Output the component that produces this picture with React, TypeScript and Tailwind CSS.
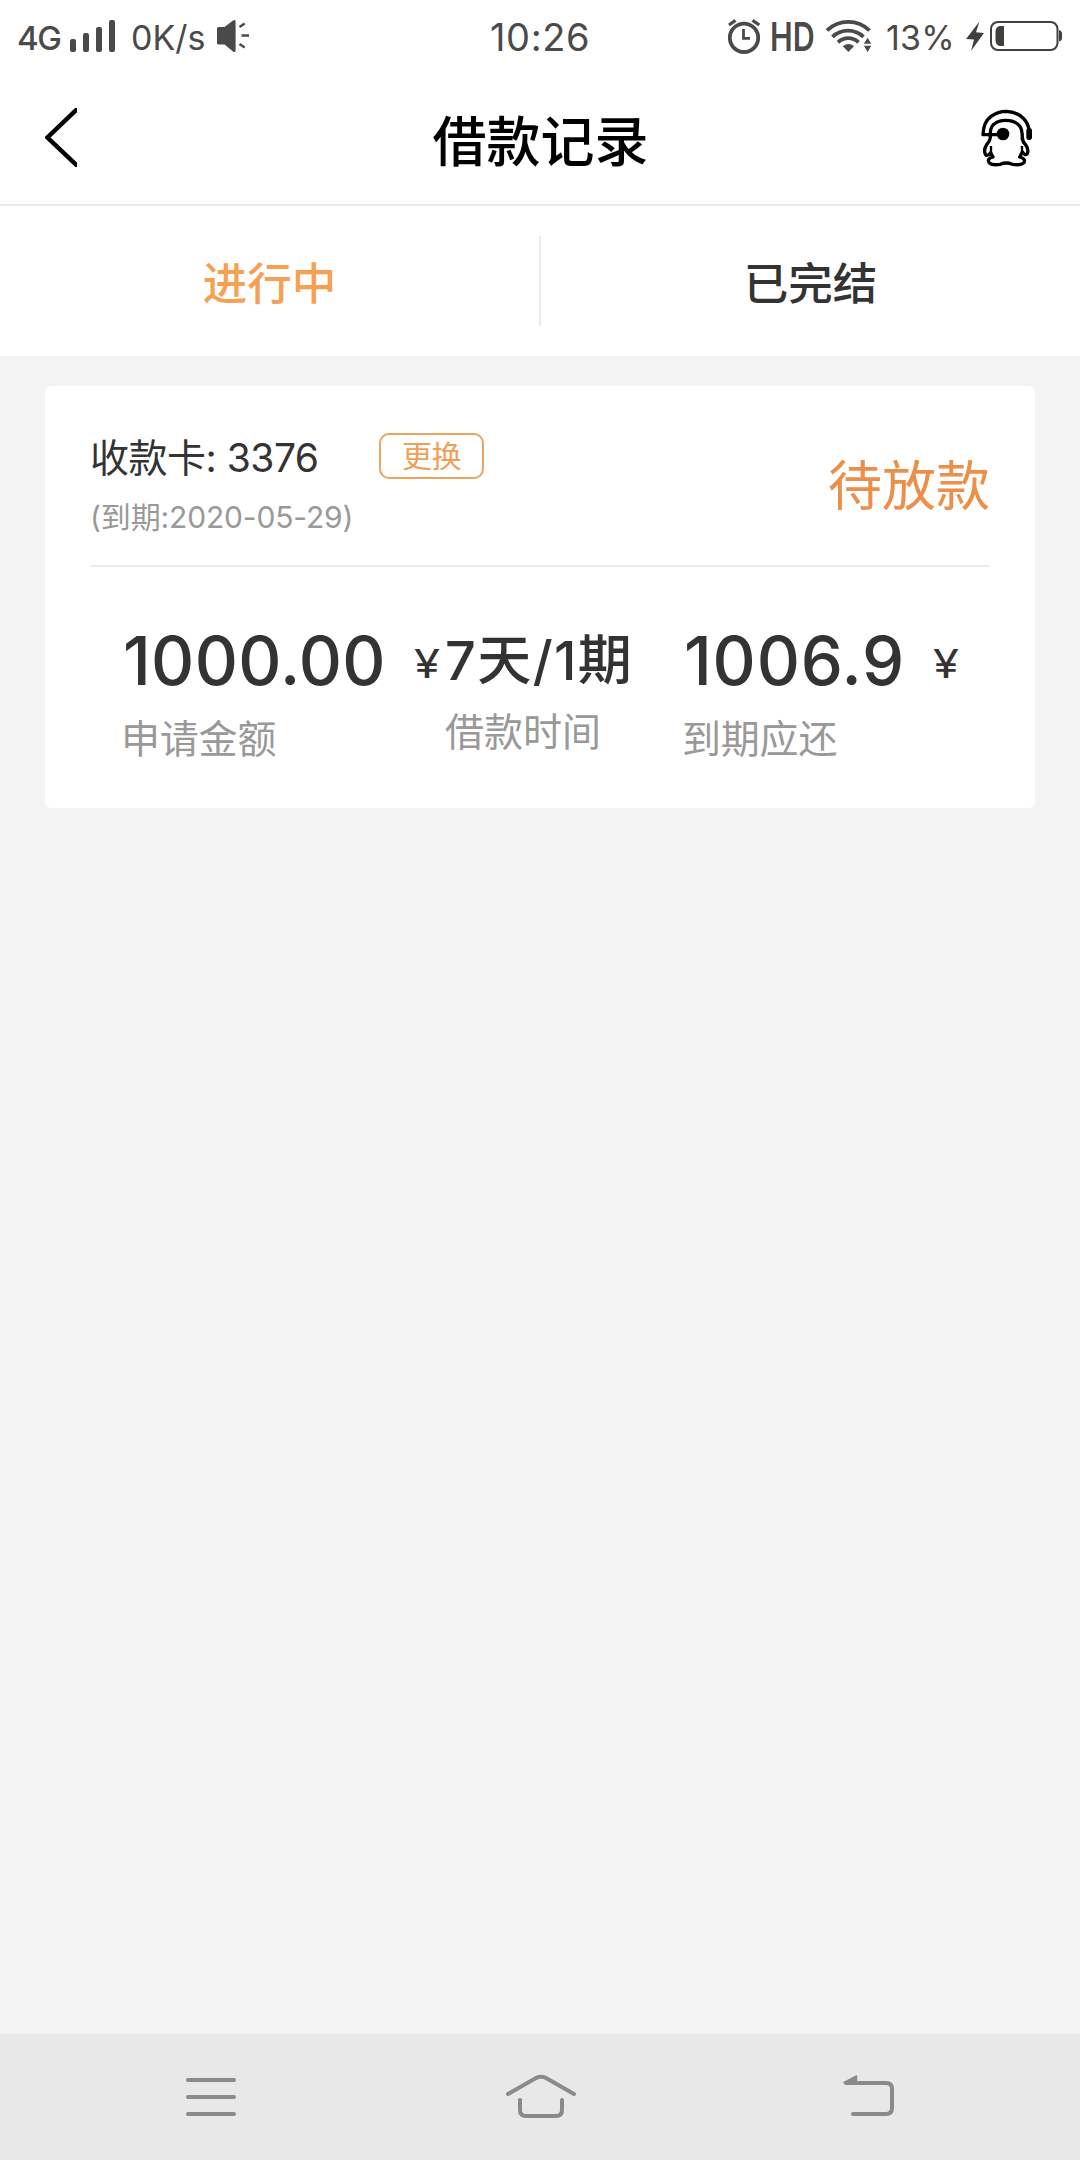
import React from 'react';

interface Amount {
    value: string;
    label: string;
    className: string;
    valueClassName: string;
}

const amounts: Record<'applied' | 'due', Amount> = {
    applied: { value: '1000.00', label: '申请金额', className: 'w-[324px]', valueClassName: 'w-[291px] tracking-[0.3px]' },
    due: { value: '1006.9', label: '到期应还', className: '', valueClassName: 'w-[249px] tracking-[0.8px]' },
};

const SignalIcon = () => (
    <svg width="46" height="34" viewBox="70 19 46 34" fill="#4a4a4a">
        <rect x="70" y="39" width="6" height="13" rx="2" />
        <rect x="83" y="33" width="6" height="19" rx="2" />
        <rect x="96" y="27" width="6" height="25" rx="2" />
        <rect x="109" y="20" width="6" height="32" rx="2" />
    </svg>
);

const SpeakerIcon = () => (
    <svg width="33" height="34" viewBox="217 19 33 34" fill="#4a4a4a">
        <path d="M218.5 27h6l8.500-6.500q2.600-1.400 2.600 1v29q0 2.400-2.600 1L224.500 44.500h-6q-1.500 0-1.500-1.500V28.500q0-1.500 1.500-1.500z" />
        <path d="M239.500 27l5.200-3.500M241.500 35.500h7.500M239.500 44l5.200 3.500" stroke="#4a4a4a" strokeWidth="2.400" />
    </svg>
);

const AlarmIcon = () => (
    <svg width="34" height="36" viewBox="727 18 34 36" fill="none" stroke="#4a4a4a">
        <circle cx="744" cy="37.800" r="14.200" strokeWidth="3.800" />
        <path d="M743.500 29v9.300h6.500" strokeWidth="2.800" />
        <path d="M729 25l6.500-4.600M752.500 20.400l6.800 4.600" strokeWidth="3.200" />
    </svg>
);

const WifiIcon = () => (
    <svg width="46" height="34" viewBox="826 19 46 34" fill="#4a4a4a">
        <g fill="none" stroke="#4a4a4a" strokeWidth="3.800">
            <path d="M827 30.500a30.500 30.500 0 0 1 42.500 0" />
            <path d="M832.500 36.800a22.500 22.500 0 0 1 31 0" />
            <path d="M838 42.300a14.800 14.800 0 0 1 20.500 0" />
        </g>
        <path d="M842.800 46.300q5.500-4.600 11.200 0l-5.600 5.700z" />
        <path d="M867.600 37.700l3.700 6h-7.400zM863.900 45.700h7.400l-3.700 6.300z" />
    </svg>
);

const BatteryIcon = () => (
    <svg width="98" height="34" viewBox="966 19 98 34" fill="#40403c">
        <path d="M979.500 21.500L966 39l8 .5-3 11.500 13-18-8-.8z" />
        <rect x="991" y="22" width="66.500" height="28" rx="7" fill="none" stroke="#40403c" strokeWidth="2" />
        <path d="M1004 26h-4.500q-4 1-4 6v8q0 5 4 6h4.500z" />
        <path d="M1059 30q3 1 3 3.500v4.500q0 2.500-3 3.500z" />
    </svg>
);

const BackIcon = () => (
    <svg width="32" height="59" viewBox="45 108 32 59" fill="none" stroke="#000" strokeWidth="4.400">
        <path d="M79 107.300L47.500 137.500 79 167.500" />
    </svg>
);

const ServiceIcon = () => (
    <svg width="52" height="58" viewBox="62 55 156 174" fill="none" stroke="#000" strokeWidth="10" strokeLinejoin="round">
        <path d="M128 132H68Q69 94 92 77Q113 62 138 62Q168 63 188 82Q204 98 206 118" />
        <path d="M90 142Q88 114 98 103Q112 89 136 89Q164 89 178 106Q187 118 186 148" />
        <path d="M90 142Q88 152 79 162Q68 180 76 193Q83 197 91 186L98 199Q78 204 87 217Q96 225 120 221Q138 213 156 221Q182 225 191 216Q197 204 178 199L186 184Q195 197 201 189Q206 176 196 162Q187 154 186 142" />
        <path d="M92 166v22M185 166v20" strokeWidth="7" />
        <circle cx="128" cy="130" r="19" fill="#000" stroke="none" />
        <rect x="198" y="112" width="17" height="36" rx="8" fill="#000" stroke="none" />
    </svg>
);

const StatusBar = () => (
    <div className="flex h-[72px] items-center pl-[17px] pr-4 text-[34px] text-[#4a4a4a]">
        <div className="flex w-[473px] items-center">
            <span className="w-[53px] pt-[6px] text-[33px] font-medium tracking-[-1.5px]">4G</span>
            <SignalIcon />
            <span className="ml-[15px] w-[86px] pt-[2px]">0K/s</span>
            <SpeakerIcon />
        </div>
        <span className="w-[237px] pt-[3px] text-[38px] tracking-[0.6px]">10:26</span>
        <AlarmIcon />
        <span className="ml-[9px] w-[56px] origin-left scale-x-[0.78] pt-[2px] text-[39px] font-semibold">HD</span>
        <WifiIcon />
        <span className="ml-[14px] w-[80px] pt-[2px] tracking-[0.2px]">13%</span>
        <BatteryIcon />
    </div>
);

const Header = () => (
    <header className="flex h-[134px] items-center justify-between border-b-2 border-[#ebebeb] pl-[45px] pr-[47px]">
        <div className="w-[55px] pb-[1px]"><BackIcon /></div>
        <h1 className="pt-[8px] text-[54px] font-medium text-black">借款记录</h1>
        <ServiceIcon />
    </header>
);

const Tabs = () => (
    <div className="flex h-[150px] items-center text-[44.5px] font-medium">
        <button className="flex-1 pt-[6px] text-[#f5a052]">进行中</button>
        <div className="h-[90px] w-[2px] bg-[#ebebeb]" />
        <button className="flex-1 pt-[6px] text-[#333]">已完结</button>
    </div>
);

const AmountColumn: React.FC<{ amount: Amount }> = ({ amount }) => (
    <div className={amount.className}>
        <div className="flex h-[90px] pl-[2px] leading-[90px]">
            <span className={`text-[67px] font-[450] ${amount.valueClassName}`}>{amount.value}</span>
            <span className="origin-left scale-x-[1.18] pt-[3px] text-[40px]">¥</span>
        </div>
        <div className="pt-[3px] text-[39px] leading-[60px] tracking-[-0.2px] text-[#999]">{amount.label}</div>
    </div>
);

const LoanCard = () => (
    <section className="mx-[45px] mt-[30px] h-[422px] rounded-md bg-white px-[45px] text-[#333]">
        <div className="flex h-[181px] items-center justify-between border-b-2 border-[#ebebeb] pt-[22px]">
            <div>
                <div className="flex items-center">
                    <span className="w-[289px] pt-[2px] text-[39px] leading-[58px] tracking-[-0.5px]">收款卡: 3376</span>
                    <button className="mb-[2px] h-[46px] w-[105px] rounded-[10px] border-2 border-[#eba45f] text-[30px] leading-[42px] tracking-[-0.4px] text-[#f0a055]">
                        更换
                    </button>
                </div>
                <div className="text-[30px] leading-[60px] tracking-[-0.15px] text-[#999]">(到期:2020-05-29)</div>
            </div>
            <span className="text-[54px] text-[#ec8f4a]">待放款</span>
        </div>
        <div className="flex pl-[31px] pt-[49px]">
            <AmountColumn amount={amounts.applied} />
            <div className="w-[237px]">
                <div className="pt-[4px] text-[54px] font-medium leading-[82px] tracking-[1.4px]">7天/1期</div>
                <div className="text-[39px] leading-[60px] text-[#999]">借款时间</div>
            </div>
            <AmountColumn amount={amounts.due} />
        </div>
    </section>
);

const NavBar = () => (
    <nav className="flex h-[126px] items-center justify-between bg-[#e8e8e8] pl-[184px] pr-[184px]">
        <svg width="54" height="46" viewBox="184 2074 54 46" stroke="#8a8a8a" strokeWidth="4" strokeLinecap="round">
            <path d="M188 2080h46M188 2097h46M188 2114h46" />
        </svg>
        <svg width="74" height="46" viewBox="503 2074 74 46" fill="none" stroke="#8a8a8a" strokeWidth="4" strokeLinecap="round">
            <path d="M508 2094l28-16q5-2.500 10 0L574 2094" />
            <path d="M520 2100v10q0 6 6 6h30q6 0 6-6v-10" />
        </svg>
        <svg width="54" height="46" viewBox="842 2074 54 46" fill="none" stroke="#8a8a8a" strokeWidth="4" strokeLinecap="round">
            <path d="M846 2083h40q6 0 6 6v19q0 6-6 6h-33" />
            <path d="M844 2082.500L856.500 2076v7z" fill="#8a8a8a" strokeWidth="1.500" strokeLinejoin="round" />
        </svg>
    </nav>
);

export default function App() {
    return (
        <div className="flex h-[2160px] w-[1080px] flex-col bg-[#f3f3f3] font-['Inter','Noto_Sans_CJK_SC',sans-serif]">
            <div className="bg-white">
                <StatusBar />
                <Header />
                <Tabs />
            </div>
            <main className="flex-1">
                <LoanCard />
            </main>
            <NavBar />
        </div>
    );
}
